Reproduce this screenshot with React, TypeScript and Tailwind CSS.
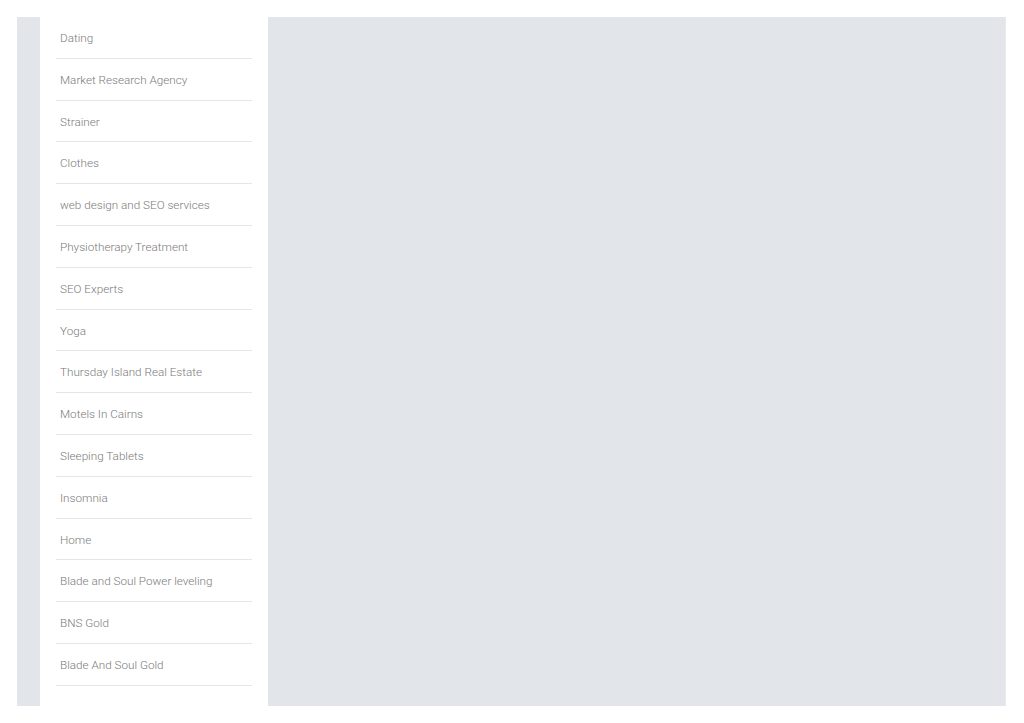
import React from "react";

const items = [
  "Dating",
  "Market Research Agency",
  "Strainer",
  "Clothes",
  "web design and SEO services",
  "Physiotherapy Treatment",
  "SEO Experts",
  "Yoga",
  "Thursday Island Real Estate",
  "Motels In Cairns",
  "Sleeping Tablets",
  "Insomnia",
  "Home",
  "Blade and Soul Power leveling",
  "BNS Gold",
  "Blade And Soul Gold",
];

export default function App() {
  return (
    <div className="w-[1024px] h-[723px] bg-white pt-[17px] pl-[17px] overflow-hidden" style={{ fontFamily: "Roboto, 'Liberation Sans', sans-serif" }}>
      <div className="flex w-[989px] h-[689px] bg-[#e2e5ea] pl-[23px]">
        <div className="w-[228px] h-full bg-white px-[16px]">
          <ul>
            {items.map((t) => (
              <li key={t} className="border-b border-[#e6e6e6] pt-[13px] pb-[11px] pl-[4px] text-[11.7px] leading-[16.8px] font-light text-[#7a7a7a]">
                {t}
              </li>
            ))}
          </ul>
        </div>
        <div className="flex-1 border-r border-[#e8ebee]" />
      </div>
    </div>
  );
}
